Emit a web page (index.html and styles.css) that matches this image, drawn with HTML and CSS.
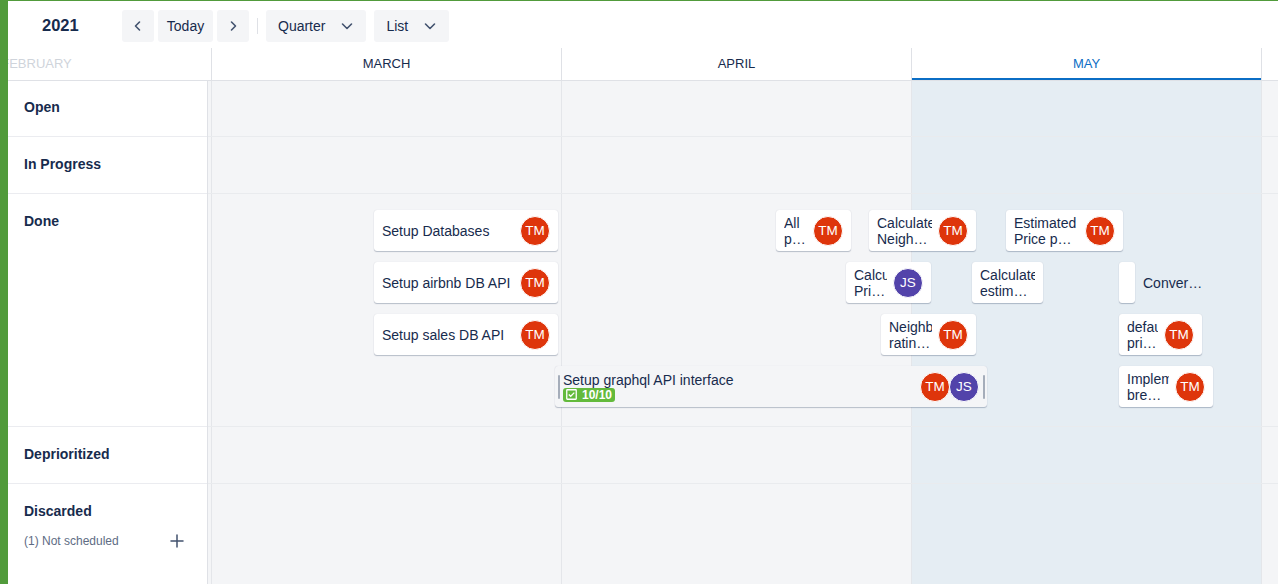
FILE: index.html
```html
<!DOCTYPE html>
<html lang="en">
<head>
<meta charset="utf-8">
<title>Timeline</title>
<link rel="stylesheet" href="styles.css">
</head>
<body>
<div class="app">
  <div class="toolbar">
    <div class="year">2021</div>
    <button class="btn icon-btn" aria-label="Previous">
      <svg width="16" height="16" viewBox="0 0 16 16"><path d="M9.5 4 L5.5 8 L9.5 12" fill="none" stroke="#42526e" stroke-width="1.6" stroke-linecap="round" stroke-linejoin="round"/></svg>
    </button>
    <button class="btn today">Today</button>
    <button class="btn icon-btn" aria-label="Next">
      <svg width="16" height="16" viewBox="0 0 16 16"><path d="M6.5 4 L10.5 8 L6.5 12" fill="none" stroke="#42526e" stroke-width="1.6" stroke-linecap="round" stroke-linejoin="round"/></svg>
    </button>
    <span class="divider"></span>
    <button class="btn drop">Quarter
      <svg width="16" height="16" viewBox="0 0 16 16"><path d="M3.5 6 L8 10.5 L12.5 6" fill="none" stroke="#42526e" stroke-width="1.6" stroke-linecap="round" stroke-linejoin="round"/></svg>
    </button>
    <button class="btn drop">List
      <svg width="16" height="16" viewBox="0 0 16 16"><path d="M3.5 6 L8 10.5 L12.5 6" fill="none" stroke="#42526e" stroke-width="1.6" stroke-linecap="round" stroke-linejoin="round"/></svg>
    </button>
  </div>

  <div class="header">
    <div class="track">
      <div class="month faded">FEBRUARY</div>
      <div class="month">MARCH</div>
      <div class="month">APRIL</div>
      <div class="month current">MAY</div>
      <div class="month">JUNE</div>
    </div>
  </div>

  <div class="body">
    <div class="sidebar">
      <div class="lane h56 first"><span class="lane-title">Open</span></div>
      <div class="lane h57"><span class="lane-title">In Progress</span></div>
      <div class="lane h233"><span class="lane-title">Done</span></div>
      <div class="lane h57"><span class="lane-title">Deprioritized</span></div>
      <div class="lane last">
        <span class="lane-title">Discarded</span>
        <div class="unscheduled">
          <span>(1) Not scheduled</span>
          <svg width="16" height="16" viewBox="0 0 16 16"><path d="M8 2 V14 M2 8 H14" stroke="#42526e" stroke-width="1.5" stroke-linecap="round"/></svg>
        </div>
      </div>
    </div>

    <div class="grid">
      <div class="cols">
        <div class="col"></div>
        <div class="col"></div>
        <div class="col"></div>
        <div class="col current"></div>
        <div class="col"></div>
      </div>
      <div class="rowlines">
        <div class="rl h56"></div>
        <div class="rl h57"></div>
        <div class="rl h233"></div>
        <div class="rl h57"></div>
      </div>

      <div class="card" style="left:166px;top:129px;width:184px">
        <div class="title"><span class="line">Setup Databases</span></div>
        <span class="avatar tm">TM</span>
      </div>
      <div class="card" style="left:166px;top:181px;width:184px">
        <div class="title"><span class="line">Setup airbnb DB API</span></div>
        <span class="avatar tm">TM</span>
      </div>
      <div class="card" style="left:166px;top:233px;width:184px">
        <div class="title"><span class="line">Setup sales DB API</span></div>
        <span class="avatar tm">TM</span>
      </div>

      <div class="card" style="left:568px;top:129px;width:75px">
        <div class="title"><span class="line">All</span><span class="line ell">properties</span></div>
        <span class="avatar tm">TM</span>
      </div>
      <div class="card" style="left:661px;top:129px;width:107px">
        <div class="title"><span class="line">Calculate</span><span class="line ell">Neighbourhood score</span></div>
        <span class="avatar tm">TM</span>
      </div>
      <div class="card" style="left:798px;top:129px;width:117px">
        <div class="title"><span class="line">Estimated</span><span class="line ell">Price per night</span></div>
        <span class="avatar tm">TM</span>
      </div>

      <div class="card" style="left:638px;top:181px;width:85px">
        <div class="title"><span class="line">Calculate</span><span class="line ell">Price index</span></div>
        <span class="avatar js">JS</span>
      </div>
      <div class="card" style="left:764px;top:181px;width:71px">
        <div class="title"><span class="line">Calculate</span><span class="line ell">estimated revenue</span></div>
      </div>
      <div class="card slim" style="left:911px;top:181px;width:16px"></div>
      <span class="outside-label" style="left:935px;top:181px">Convert currency</span>

      <div class="card" style="left:673px;top:233px;width:95px">
        <div class="title"><span class="line">Neighbourhood</span><span class="line ell">rating score</span></div>
        <span class="avatar tm">TM</span>
      </div>
      <div class="card" style="left:911px;top:233px;width:83px">
        <div class="title"><span class="line">default</span><span class="line ell">price model</span></div>
        <span class="avatar tm">TM</span>
      </div>

      <div class="card epic" style="left:347px;top:285px;width:432px">
        <span class="handle"></span>
        <div class="epic-body">
          <span class="epic-title">Setup graphql API interface</span>
          <span class="badge">
            <svg width="11" height="11" viewBox="0 0 11 11"><rect x="0.75" y="0.75" width="9.5" height="9.5" rx="0.5" fill="none" stroke="#fff" stroke-width="1.3"/><path d="M2.8 5.5 L4.7 7.3 L8.3 3.6" fill="none" stroke="#fff" stroke-width="1.3"/></svg>
            10/10
          </span>
        </div>
        <span class="avatar tm">TM</span>
        <span class="avatar js stack">JS</span>
        <span class="handle right"></span>
      </div>
      <div class="card" style="left:911px;top:285px;width:94px">
        <div class="title"><span class="line">Implement</span><span class="line ell">breakdown view</span></div>
        <span class="avatar tm">TM</span>
      </div>
    </div>
  </div>
</div>
</body>
</html>
```

FILE: styles.css
```css
* { box-sizing: border-box; }

html, body {
  margin: 0;
  height: 100%;
}

body {
  font-family: "Liberation Sans", Arial, sans-serif;
  color: #172b4d;
  background: #fff;
  overflow: hidden;
}

.app {
  height: 584px;
  border-left: 8px solid #519b3b;
  border-top: 1px solid #519b3b;
  display: flex;
  flex-direction: column;
  overflow: hidden;
}

/* Toolbar */
.toolbar {
  height: 47px;
  flex: 0 0 47px;
  display: flex;
  align-items: center;
  padding-left: 34px;
  padding-top: 2px;
  gap: 4px;
}

.year {
  width: 76px;
  font-size: 16.5px;
  font-weight: bold;
  color: #172b4d;
}

.btn {
  height: 32px;
  border: none;
  border-radius: 3px;
  background: #f4f5f7;
  color: #172b4d;
  font-family: inherit;
  font-size: 14px;
  padding: 0 8px;
  display: inline-flex;
  align-items: center;
  cursor: pointer;
}

.btn.today {
  width: 55px;
  justify-content: center;
}

.icon-btn {
  width: 32px;
  padding: 0;
  justify-content: center;
}

.drop {
  padding: 0 11px 0 12px;
  gap: 14px;
}

.divider {
  width: 1px;
  height: 16px;
  background: #dfe1e6;
  margin: 0 4px 0 4px;
}

.drop + .drop { margin-left: 4px; }

/* Header */
.header {
  height: 33px;
  flex: 0 0 33px;
  border-bottom: 1px solid #dfe1e6;
  overflow: hidden;
}

.track {
  display: flex;
  height: 100%;
  margin-left: -146px;
}

.month {
  flex: 0 0 350px;
  border-right: 1px solid #dfe1e6;
  text-align: center;
  font-size: 13px;
  line-height: 31px;
  color: #172b4d;
}

.month.faded { color: #cfd4db; }

.month.current {
  color: #0b6ec5;
  box-shadow: inset 0 -2px 0 #0b6ec5;
}

/* Body */
.body {
  flex: 1;
  display: flex;
  min-height: 0;
}

.sidebar {
  flex: 0 0 200px;
  border-right: 1px solid #dfe1e6;
  display: flex;
  flex-direction: column;
}

.lane {
  border-bottom: 1px solid #ebecf0;
  padding: 17px 22px 0 16px;
}

.lane.first { padding-top: 16px; }
.lane.last { flex: 1; border-bottom: none; }

.h56 { height: 56px; }
.h57 { height: 57px; }
.h233 { height: 233px; }

.lane-title {
  display: block;
  font-size: 14px;
  font-weight: bold;
  line-height: 20px;
}

.unscheduled {
  margin-top: 12px;
  display: flex;
  justify-content: space-between;
  align-items: center;
  font-size: 12px;
  line-height: 16px;
  color: #5e6c84;
}

/* Grid */
.grid {
  flex: 1;
  position: relative;
  overflow: hidden;
}

.cols {
  position: absolute;
  top: 0;
  bottom: 0;
  left: -346px;
  display: flex;
}

.col {
  flex: 0 0 350px;
  background: #f4f5f7;
  border-right: 1px solid #e4e6ea;
}

.col.current { background: #e5edf3; }

.rowlines {
  position: absolute;
  top: 0;
  left: 0;
  right: 0;
}

.rl { border-bottom: 1px solid #e9ebee; }

/* Cards */
.card {
  position: absolute;
  height: 41px;
  display: flex;
  align-items: center;
  padding: 0 8px;
  background: #fff;
  border-radius: 3px;
  box-shadow: 0 1px 1px rgba(9, 30, 66, 0.25), 0 0 1px rgba(9, 30, 66, 0.15);
}

.title {
  flex: 1;
  min-width: 0;
  font-size: 14px;
  line-height: 16px;
  padding-top: 1px;
  color: #172b4d;
}

.line {
  display: block;
  white-space: nowrap;
  overflow: hidden;
}

.line.ell { text-overflow: ellipsis; }

.avatar {
  flex: 0 0 30px;
  width: 30px;
  height: 30px;
  margin-left: 6px;
  border-radius: 50%;
  border: 1px solid #fff;
  color: #fff;
  font-size: 13.5px;
  display: flex;
  align-items: center;
  justify-content: center;
}

.avatar.tm { background: #de350b; }
.avatar.js { background: #5243aa; }
.avatar.stack { margin-left: -1px; }

.card.slim { padding: 0; }

.outside-label {
  position: absolute;
  height: 41px;
  max-width: 60px;
  line-height: 42px;
  font-size: 14px;
  white-space: nowrap;
  overflow: hidden;
  text-overflow: ellipsis;
  color: #172b4d;
}

.card.epic {
  background: #f4f5f7;
  padding: 0 2px 0 3px;
}

.handle {
  flex: 0 0 2px;
  width: 2px;
  height: 24px;
  background: #a5adba;
  border-radius: 1px;
}

.handle.right { margin-left: 4px; }

.epic-body {
  flex: 1;
  min-width: 0;
  margin-left: 3px;
  display: flex;
  flex-direction: column;
  align-items: flex-start;
}

.epic-title {
  font-size: 14px;
  line-height: 16px;
  white-space: nowrap;
}

.badge {
  display: inline-flex;
  align-items: center;
  gap: 5px;
  height: 14px;
  padding: 0 3px;
  border-radius: 3px;
  background: #63ba3c;
  color: #fff;
  font-size: 12px;
  font-weight: bold;
}
```
